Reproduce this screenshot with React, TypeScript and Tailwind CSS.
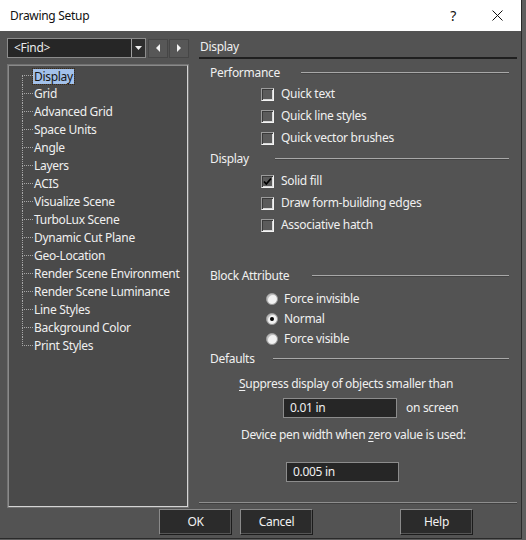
import React from "react";

const treeItems = [
  "Display",
  "Grid",
  "Advanced Grid",
  "Space Units",
  "Angle",
  "Layers",
  "ACIS",
  "Visualize Scene",
  "TurboLux Scene",
  "Dynamic Cut Plane",
  "Geo-Location",
  "Render Scene Environment",
  "Render Scene Luminance",
  "Line Styles",
  "Background Color",
  "Print Styles",
];

function GroupLabel({ label, line }: { label: string; line: string }) {
  return (
    <div className="flex h-[20px] items-center pl-[11px] pr-[8px]">
      <span>{label}</span>
      <div className={`ml-auto flex flex-col ${line}`}>
        <div className="h-px bg-[#a8a8a8]" />
        <div className="h-px bg-[#444]" />
      </div>
    </div>
  );
}

function Check({ label, checked = false }: { label: string; checked?: boolean }) {
  return (
    <div className="flex h-[22px] items-center pl-[62px]">
      <span className="flex h-[13px] w-[13px] items-center justify-center border border-t-[#9c9c9c] border-l-[#9c9c9c] border-r-[#f4f4f4] border-b-[#f4f4f4] bg-[#5b5b5b] shadow-[inset_1px_1px_0_#3a3a3a,inset_-1px_-1px_0_#d8d8d8]">
        {checked && (
          <svg width="9" height="9" viewBox="0 0 9 9">
            <path d="M1 4.5 L3.3 7 L8 1.5" stroke="#000" strokeWidth="1.8" fill="none" />
          </svg>
        )}
      </span>
      <span className="ml-[7px]">{label}</span>
    </div>
  );
}

function Radio({ label, checked = false }: { label: string; checked?: boolean }) {
  return (
    <div className="flex h-[20px] items-center pl-[67px]">
      <span className="flex h-[12px] w-[12px] items-center justify-center rounded-full border border-[#9a9a9a] bg-[#f2f2f2] shadow-[inset_1px_1px_0_#bdbdbd]">
        {checked && <span className="h-[4px] w-[4px] rounded-full bg-black" />}
      </span>
      <span className="ml-[6px]">{label}</span>
    </div>
  );
}

function Button({ label }: { label: string }) {
  return (
    <div className="flex h-[26px] w-[73px] items-center justify-center border border-t-[#8a8a8a] border-l-[#8a8a8a] border-r-[#1c1c1c] border-b-[#1c1c1c] bg-[#2b2b2b] text-[#f2f2f2] shadow-[inset_-1px_-1px_0_#555]">
      {label}
    </div>
  );
}

export default function App() {
  return (
    <div className="h-[540px] w-[526px] whitespace-nowrap bg-[#5e5e5e] text-[12px] leading-[16px] tracking-[-0.3px] text-[#f0f0f0] [font-family:'Noto_Sans',sans-serif]">
      <div className="flex h-[539px] w-[522px] flex-col border-r border-b border-[#2a2a2a] bg-[#535353]">
        {/* title bar */}
        <div className="flex h-[31px] items-center bg-white pl-[10px] text-[#111]">
          <span>Drawing Setup</span>
          <span className="ml-auto text-[14px]">?</span>
          <svg className="ml-[36px] mr-[18px]" width="11" height="11" viewBox="0 0 11 11">
            <path d="M0.5 0.5 L10.5 10.5 M10.5 0.5 L0.5 10.5" stroke="#111" strokeWidth="1" />
          </svg>
        </div>

        <div className="flex gap-[10px] pl-[7px] pt-[6px]">
          {/* left column */}
          <div className="flex w-[182px] flex-col">
            <div className="flex h-[22px] items-center">
              <div className="flex h-[20px] w-[139px] items-stretch border border-[#8c8c8c] bg-[#262626]">
                <span className="flex flex-1 items-center pl-[6px] text-[#eaeaea]">&lt;Find&gt;</span>
                <span className="flex w-[14px] items-center justify-center border-l border-[#a0a0a0] bg-[#2e2e2e]">
                  <svg width="7" height="4" viewBox="0 0 7 4">
                    <path d="M0 0 H7 L3.5 4 Z" fill="#f0f0f0" />
                  </svg>
                </span>
              </div>
              <span className="ml-[2px] flex h-[19px] w-[20px] items-center justify-center border border-[#464646] bg-[#575757]">
                <svg width="4" height="8" viewBox="0 0 4 8">
                  <path d="M4 0 V8 L0 4 Z" fill="#f4f4f4" />
                </svg>
              </span>
              <span className="ml-[1px] flex h-[19px] w-[20px] items-center justify-center border border-[#464646] bg-[#575757]">
                <svg width="4" height="8" viewBox="0 0 4 8">
                  <path d="M0 0 V8 L4 4 Z" fill="#f4f4f4" />
                </svg>
              </span>
            </div>
            <div className="mt-[5px] h-[444px] border border-[#727272]">
              <div className="h-full border border-t-[#8a8a8a] border-l-[#8a8a8a] border-r-[#d4d4d4] border-b-[#d4d4d4] bg-[#4a4a4a] pt-px">
                {treeItems.map((item, i) => {
                  const first = i === 0;
                  const last = i === treeItems.length - 1;
                  return (
                    <div key={item} className="flex h-[18px] items-stretch">
                      <div className="ml-[13px] flex w-[11px] flex-col">
                        <div
                          className={`h-[9px] border-b border-dotted border-[#a8a8a8] ${first ? "" : "border-l"}`}
                        />
                        <div className={`flex-1 border-dotted border-[#a8a8a8] ${last ? "" : "border-l"}`} />
                      </div>
                      <div className="flex items-center">
                        {first ? (
                          <span className="px-px leading-[15px] bg-[#a3c1ea] text-[#151515] outline outline-1 outline-dotted outline-[#3a2a1a]">
                            {item}
                          </span>
                        ) : (
                          <span className="px-px">{item}</span>
                        )}
                      </div>
                    </div>
                  );
                })}
              </div>
            </div>
          </div>

          {/* right column */}
          <div className="flex w-[318px] flex-col">
            <div className="flex h-[22px] items-end border-b-2 border-[#1f1f1f] pb-[2px] pl-px">
              <span>Display</span>
            </div>
            <div className="mt-[4px]">
              <GroupLabel label="Performance" line="w-[208px]" />
            </div>
            <Check label="Quick text" />
            <Check label="Quick line styles" />
            <Check label="Quick vector brushes" />
            <GroupLabel label="Display" line="w-[234px]" />
            <div className="mt-px">
              <Check label="Solid fill" checked />
              <Check label="Draw form-building edges" />
              <Check label="Associative hatch" />
            </div>
            <div className="mt-[30px]">
              <GroupLabel label="Block Attribute" line="w-[197px]" />
            </div>
            <div className="mt-[3px]">
              <Radio label="Force invisible" />
              <Radio label="Normal" checked />
              <Radio label="Force visible" />
            </div>
            <GroupLabel label="Defaults" line="w-[236px]" />
            <div className="mt-[5px] flex h-[20px] items-center pl-[40px]">
              <span>
                <span className="underline underline-offset-2">S</span>uppress display of objects smaller than
              </span>
            </div>
            <div className="mt-[4px] flex h-[20px] items-center pl-[84px]">
              <div className="flex h-[20px] w-[114px] items-center border border-[#8c8c8c] bg-[#262626] pl-[6px]">
                0.01 in
              </div>
              <span className="ml-[9px]">on screen</span>
            </div>
            <div className="mt-[7px] flex h-[20px] items-center pl-[42px]">
              <span>
                Device pen width when <span className="underline underline-offset-2">z</span>ero value is used:
              </span>
            </div>
            <div className="mt-[17px] flex h-[20px] items-center pl-[87px]">
              <div className="flex h-[20px] w-[113px] items-center border border-[#8c8c8c] bg-[#262626] pl-[6px]">
                0.005 in
              </div>
            </div>
            <div className="mt-[20px] flex flex-col">
              <div className="h-px bg-[#8e8e8e]" />
              <div className="h-px bg-[#404040]" />
            </div>
          </div>
        </div>

        {/* buttons */}
        <div className="mt-[1px] flex pl-[159px]">
          <Button label="OK" />
          <div className="ml-[8px]">
            <Button label="Cancel" />
          </div>
          <div className="ml-[87px]">
            <Button label="Help" />
          </div>
        </div>
      </div>
    </div>
  );
}
